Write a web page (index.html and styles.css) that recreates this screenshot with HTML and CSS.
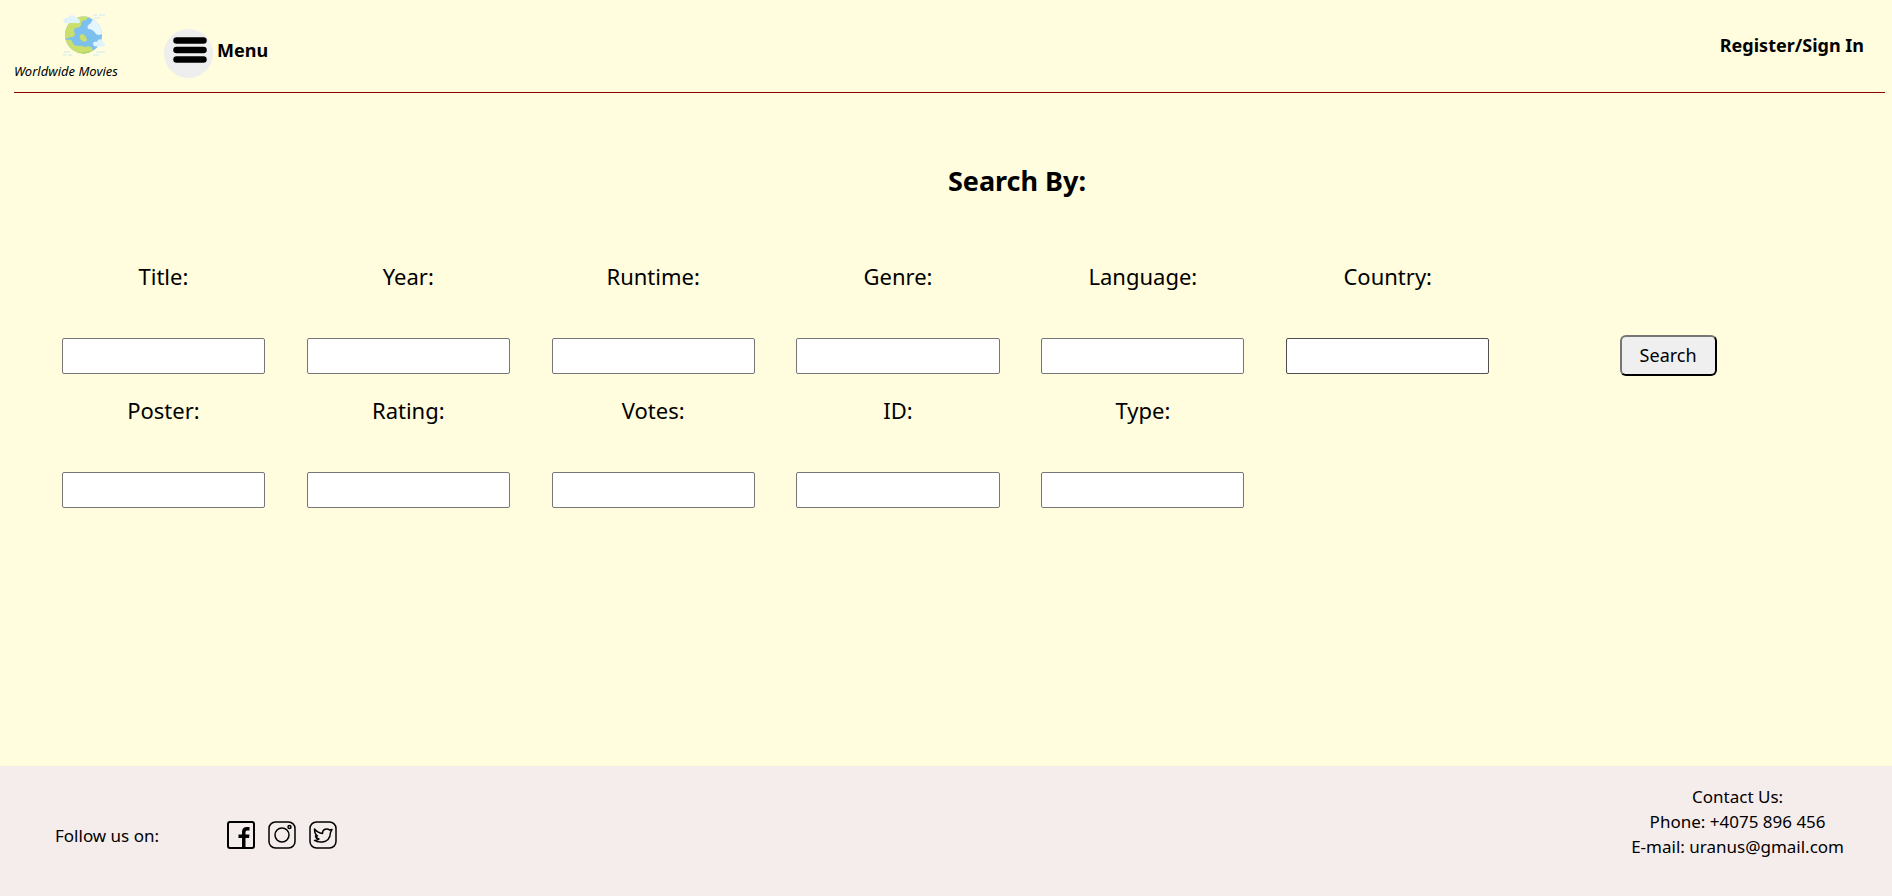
FILE: index.html
```html
<!DOCTYPE html>
<html lang="en">
<head>
<meta charset="utf-8">
<title>Worldwide Movies</title>
<link rel="stylesheet" href="styles.css">
</head>
<body>
<header class="header">
  <a class="brand" href="#">
    <svg class="brand-logo" viewBox="0 0 42 42" aria-hidden="true">
      <defs><clipPath id="globe"><circle cx="20.500" cy="21" r="18.500"/></clipPath></defs>
      <g clip-path="url(#globe)">
        <rect width="42" height="42" fill="#7dbfed"/>
        <path d="M0 0h27v4q-4 0-4 2-5 0-5 5-1 3-6 3-2 3 0 6-1 4-5 3-2 2-5 1H0z" fill="#cbdf6c"/>
        <path d="M1 27q6-3 8 0 1 5 6 5 4-1 6 1 6-2 8 1l2 8H3z" fill="#cbdf6c"/>
        <path d="M18 20q5 0 6 6-1 3-5 1-4-3-1-7z" fill="#cbdf6c"/>
        <path d="M28 2q11 5 12 18l-4 0q0-10-10-17z" fill="#d4edfb"/>
        <path d="M28 9q-5 3-3 6 5 0 8 5 3 2 6 0l0-6-6-8q-4-1-5 3z" fill="#e3f5fd"/>
        <path d="M12 38q10 2 15-1l-1 4H12z" fill="#9ccf51"/>
      </g>
      <path d="M2 9q-3-1-1-4 2-2 4-1 2-5 7-2l1 2q4 0 4 4-1 2-4 1z" fill="#e0f3fc"/>
      <path d="M31 32q-2-2 0-4 2-1 3 0 1-4 5-2 1 1 1 3 3 1 2 3-4 1-11 0z" fill="#e0f3fc"/>
      <path d="M30 1h4M36 1h6M31 4h6M1 38h6M0 41h3M5 41h4M33 38h9M30 41h6" stroke="#cae9f7"/>
    </svg>
    <span class="brand-name">Worldwide Movies</span>
  </a>
  <button class="menu" type="button">
    <span class="menu-icon">
      <svg viewBox="0 0 34 26" aria-hidden="true"><path d="M3.500 3.500h27M3.500 13h27M3.500 22.500h27" stroke="#000" stroke-width="6.500" stroke-linecap="round"/></svg>
    </span>
    <span class="menu-label">Menu</span>
  </button>
  <a class="sign-in" href="#">Register/Sign In</a>
</header>
<main class="main">
  <h1 class="heading">Search By:</h1>
  <form class="search">
    <div class="field"><label for="title">Title:</label><input id="title" type="text"></div>
    <div class="field"><label for="year">Year:</label><input id="year" type="text"></div>
    <div class="field"><label for="runtime">Runtime:</label><input id="runtime" type="text"></div>
    <div class="field"><label for="genre">Genre:</label><input id="genre" type="text"></div>
    <div class="field"><label for="language">Language:</label><input id="language" type="text"></div>
    <div class="field"><label for="country">Country:</label><input id="country" class="active" type="text"></div>
    <button class="submit" type="submit">Search</button>
    <div class="field"><label for="poster">Poster:</label><input id="poster" type="text"></div>
    <div class="field"><label for="rating">Rating:</label><input id="rating" type="text"></div>
    <div class="field"><label for="votes">Votes:</label><input id="votes" type="text"></div>
    <div class="field"><label for="id">ID:</label><input id="id" type="text"></div>
    <div class="field"><label for="type">Type:</label><input id="type" type="text"></div>
  </form>
</main>
<footer class="footer">
  <div class="follow">
    <span>Follow us on:</span>
    <nav class="social" aria-label="Social media">
      <a href="#" aria-label="Facebook"><svg viewBox="0 0 28 28"><rect x="1" y="1" width="26" height="26" rx="2" fill="none" stroke="#000" stroke-width="2"/><path d="M15 27V17h-3.500v-3.500H15V11q0-5 5-5h2.500v3.500H20q-1.500 0-1.500 2v2h4l-.5 3.500h-3.500v10z"/></svg></a>
      <a href="#" aria-label="Instagram"><svg viewBox="0 0 28 28" fill="none" stroke="#000" stroke-width="1.500"><rect x="1" y="1" width="26" height="26" rx="6.500"/><circle cx="14" cy="14" r="7"/><circle cx="21.500" cy="6" r="1.500"/></svg></a>
      <a href="#" aria-label="Twitter"><svg viewBox="0 0 28 28" fill="none" stroke="#000" stroke-width="1.500" stroke-linejoin="round"><rect x="1" y="1" width="26" height="26" rx="6.500"/><path d="M5.500 19.500q3 0 4.500-1.500-3-.5-3.500-3h2Q5.500 13 5.500 8q3.500 4 8 4.500 0-4.500 4.500-4.500 1.500 0 2.500 1l2.500-.5-1.500 3Q21 20 13.500 21 8.500 21.500 5.500 19.500z"/></svg></a>
    </nav>
  </div>
  <address class="contact">
    <span>Contact Us:</span>
    <span>Phone: +4075 896 456</span>
    <span>E-mail: uranus@gmail.com</span>
  </address>
</footer>
</body>
</html>
```
FILE: styles.css
```css
* { box-sizing: border-box; }
body {
  display: flex;
  flex-direction: column;
  min-height: 100vh;
  margin: 0;
  background: #fffddd;
  color: #000;
  font: 18px/25px "Comic Sans MS", "Noto Sans", sans-serif;
}
a { color: inherit; text-decoration: none; }
svg { display: block; }
.header {
  display: flex;
  align-items: flex-start;
  height: 93px;
  margin: 0 7px 0 14px;
  border-bottom: 1px solid #8b0000;
}
.brand {
  display: flex;
  flex-direction: column;
  width: 150px;
  padding-top: 14px;
}
.brand-logo { width: 42px; height: 42px; margin-left: 49px; }
.brand-name { margin-top: 5px; font-size: 13px; line-height: 20px; font-style: italic; }
.menu {
  display: flex;
  gap: 4px;
  margin-top: 29px;
  padding: 0;
  border: 0;
  background: none;
  color: inherit;
  font: bold 18px/42px "Comic Sans MS", "Noto Sans", sans-serif;
}
.menu-icon {
  width: 49px;
  height: 49px;
  padding: 8px 6px 0 9px;
  border-radius: 50%;
  background: #eee;
}
.sign-in { margin: 33px 21px 0 auto; font-weight: bold; }
.main { flex: 1; padding-bottom: 40px; }
.heading {
  margin: 70px 0 0;
  padding-left: 142px;
  font-size: 27px;
  line-height: 36px;
  text-align: center;
}
.search {
  display: grid;
  grid-template-columns: repeat(6, 245fr) 316fr;
  row-gap: 20px;
  align-items: end;
  margin: 61px 66px 0 41px;
}
.field {
  display: flex;
  flex-direction: column;
  align-items: center;
  gap: 46px;
  font-size: 22px;
  line-height: 32px;
}
.field input {
  width: 83%;
  height: 36px;
  border: 1px solid #767676;
  border-radius: 2px;
  background: #fff;
  font: inherit;
}
.field .active { border-color: #4f4f4f; }
.submit {
  justify-self: center;
  margin-bottom: -2px;
  padding: 6px 18px;
  border: 2px outset #767676;
  border-color: #767676 #212121 #212121 #767676;
  border-radius: 6px;
  background: #efefef;
  color: #000;
  font: inherit;
}
.footer {
  display: flex;
  justify-content: space-between;
  min-height: 130px;
  padding: 18px 48px 36px 55px;
  background: #f5ecec;
  font-size: 17px;
}
.follow { display: flex; align-items: center; gap: 68px; padding-top: 26px; }
.social { display: flex; gap: 13px; }
.social svg { width: 28px; height: 28px; }
.contact {
  display: flex;
  flex-direction: column;
  font-style: normal;
  text-align: center;
}
```
